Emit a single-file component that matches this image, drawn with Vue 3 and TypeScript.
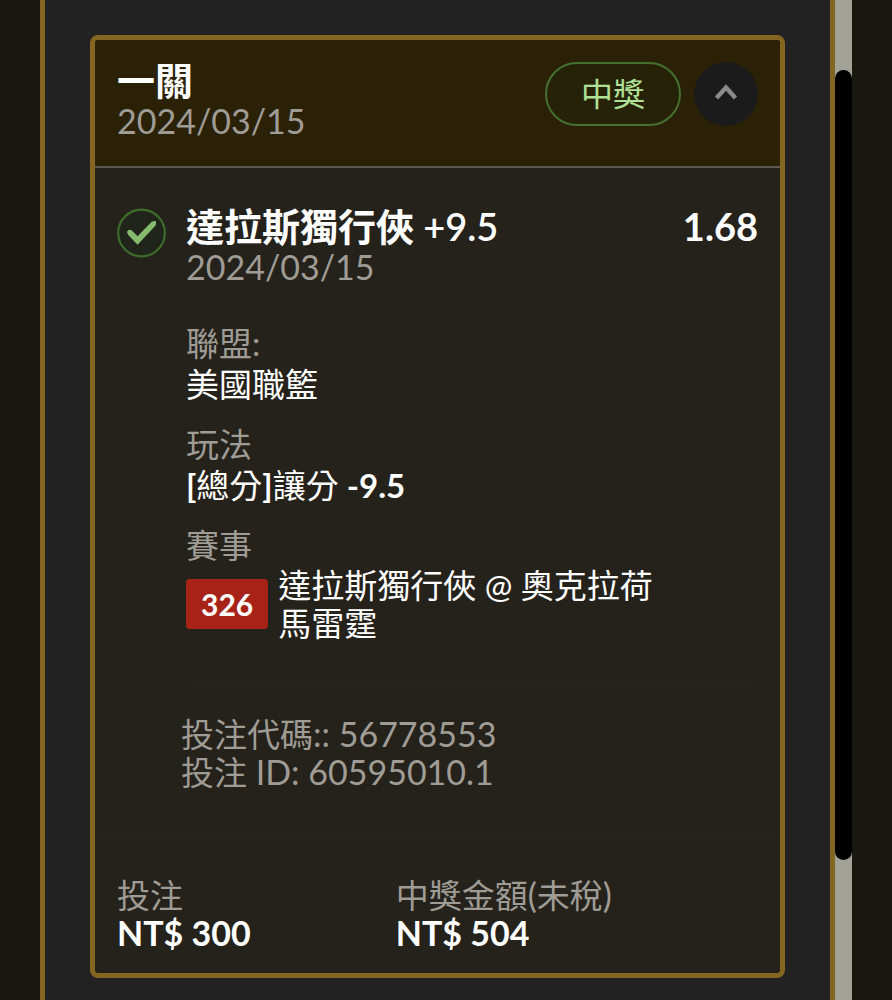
<script setup lang="ts">
import { ref } from 'vue'

interface Amount {
  label: string
  value: string
}

interface Run {
  text: string
  latin: boolean
}

const open = ref(true)

const bet = {
  title: '一關',
  date: '2024/03/15',
  status: '中獎',
}

const leg = {
  team: '達拉斯獨行俠',
  line: '+9.5',
  odds: '1.68',
  date: '2024/03/15',
  league: '美國職籃',
  market: '[總分]讓分 -9.5',
  code: '326',
  match: '達拉斯獨行俠 @ 奧克拉荷馬雷霆',
}

const ids = ['投注代碼:: 56778553', '投注 ID: 60595010.1']

const amounts: Amount[] = [
  { label: '投注', value: 'NT$ 300' },
  { label: '中獎金額(未稅)', value: 'NT$ 504' },
]

// Splits mixed text so that Latin runs can be set apart from Chinese ones.
function runs(text: string): Run[] {
  return text
    .split(/([\x20-\x7e]+)/)
    .filter((part) => part !== '')
    .map((part) => ({ text: part, latin: /^[\x20-\x7e]/.test(part) }))
}
</script>

<template>
  <div class="page">
    <main class="panel">
      <article class="card">
        <header class="card-head">
          <div>
            <h1 class="title">{{ bet.title }}</h1>
            <p class="date">{{ bet.date }}</p>
          </div>
          <div class="head-actions">
            <span class="status">{{ bet.status }}</span>
            <button class="toggle" type="button" aria-label="收合" :aria-expanded="open" @click="open = !open">
              <svg viewBox="0 0 64 64" width="64" height="64" aria-hidden="true">
                <path d="M22.5 36 L32 25.6 L41.5 36" fill="none" stroke="#8a8a8a" stroke-width="4.4" />
              </svg>
            </button>
          </div>
        </header>

        <template v-if="open">
          <section class="leg">
            <svg class="won" viewBox="0 0 50 50" aria-hidden="true">
              <circle cx="25" cy="25" r="23.8" fill="#20241a" stroke="#3d6d2b" stroke-width="2.2" />
              <path d="M10.4 24.8 Q9.8 22.8 11.8 21.9 Q13.8 21.2 15.4 22.8 L21 28.2 L35.4 13.6 Q37.4 12.2 39.6 13 Q40.6 15 39.4 17.4 L21 37 L11.4 27 Z" fill="#84bb6c" />
            </svg>
            <div class="leg-main">
              <div class="leg-top">
                <h2 class="title">{{ leg.team }} <span class="line">{{ leg.line }}</span></h2>
                <strong class="odds">{{ leg.odds }}</strong>
              </div>
              <p class="date">{{ leg.date }}</p>
              <dl class="details">
                <div>
                  <dt>聯盟:</dt>
                  <dd>{{ leg.league }}</dd>
                </div>
                <div>
                  <dt>玩法</dt>
                  <dd><span v-for="(run, i) in runs(leg.market)" :key="i" :class="{ latin: run.latin }">{{ run.text }}</span></dd>
                </div>
                <div>
                  <dt>賽事</dt>
                  <dd class="match">
                    <span class="code">{{ leg.code }}</span>
                    <span>{{ leg.match }}</span>
                  </dd>
                </div>
              </dl>
            </div>
          </section>

          <section class="ids">
            <p v-for="id in ids" :key="id"><span v-for="(run, i) in runs(id)" :key="i" :class="{ number: run.latin }">{{ run.text }}</span></p>
          </section>
        </template>

        <footer class="amounts">
          <div v-for="amount in amounts" :key="amount.label">
            <p class="amount-label"><span v-for="(run, i) in runs(amount.label)" :key="i" :class="{ number: run.latin }">{{ run.text }}</span></p>
            <p class="amount-value">{{ amount.value }}</p>
          </div>
        </footer>
      </article>
    </main>
    <div class="track">
      <div class="thumb"></div>
    </div>
  </div>
</template>

<style>
body {
  background: #1a1710;
}
</style>

<style scoped>
.page {
  display: flex;
  min-height: 100vh;
  padding: 0 40px;
  box-sizing: border-box;
  background: #1a1710;
  color: #fff;
  font-family: Lato, "Noto Sans CJK TC", sans-serif;
  font-size: 33px;
  line-height: 38px;
}

.panel {
  flex: 1;
  min-width: 0;
  padding: 35px 45px 22px;
  border: solid #856620;
  border-width: 0 5px;
  background: #222;
}

.track {
  flex: none;
  width: 17px;
  padding-top: 70px;
  box-sizing: border-box;
  background: #a2a297;
}

.thumb {
  height: 790px;
  border-radius: 9px;
  background: #000;
}

.card {
  border: 5px solid #856620;
  border-radius: 8px;
  background: #25221b;
}

h1,
h2,
p,
dl,
dd {
  margin: 0;
}

.card-head {
  display: flex;
  justify-content: space-between;
  padding: 22px;
  border-bottom: 2px solid #5c584e;
  border-radius: 3px 3px 0 0;
  background: #2b2107;
}

.title {
  font-size: 38px;
  line-height: 36px;
  font-weight: 700;
}

.date {
  color: #9f9c96;
  font-size: 34px;
  line-height: 46px;
}

.head-actions {
  display: flex;
  gap: 13px;
}

.status {
  height: 64px;
  padding: 0 34px;
  box-sizing: border-box;
  border: 2px solid #447030;
  border-radius: 32px;
  background: #262208;
  color: #b0e096;
  font-size: 32px;
  line-height: 60px;
}

.toggle {
  width: 64px;
  height: 64px;
  padding: 0;
  border: 0;
  border-radius: 50%;
  background: #1b1b1b;
  cursor: pointer;
}

.toggle svg {
  display: block;
}

.leg {
  display: flex;
  gap: 20px;
  padding: 40px 22px 0;
}

.won {
  flex: none;
  width: 49px;
  height: 50px;
}

.leg-main {
  flex: 1;
  min-width: 0;
  padding-bottom: 41px;
  border-bottom: 1px solid #2a2721;
}

.leg-top {
  display: flex;
  justify-content: space-between;
}

.line {
  font-weight: 600;
}

.odds {
  font-size: 38px;
  line-height: 36px;
  font-weight: 700;
}

.details {
  display: grid;
  gap: 20px;
  padding: 33px 88px 0 0;
}

dt {
  color: #9f9c96;
  line-height: 41px;
}

dd {
  line-height: 40px;
}

.latin {
  font-weight: 700;
}

.number {
  font-size: 34px;
}

.match {
  display: flex;
  align-items: center;
  gap: 10px;
  line-height: 38px;
}

.code {
  flex: none;
  padding: 0 15px;
  border-radius: 4px;
  background: #a72318;
  font-size: 30px;
  font-weight: 700;
  line-height: 50px;
}

.ids {
  padding: 31px 22px 42px 86px;
  border-bottom: 1px solid #2a2721;
  color: #9f9c96;
}

.amounts {
  display: grid;
  grid-template-columns: 10fr 13fr;
  padding: 42px 22px 21px;
}

.amount-label {
  color: #9f9c96;
}

.amount-value {
  font-size: 34px;
  font-weight: 700;
}
</style>
